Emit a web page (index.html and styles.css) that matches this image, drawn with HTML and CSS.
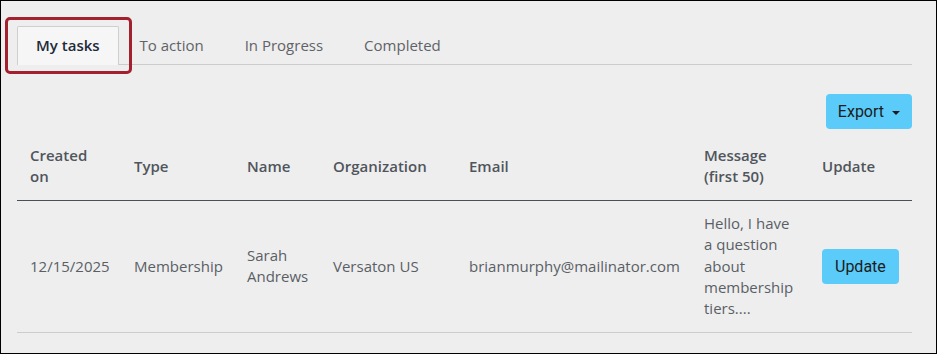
FILE: index.html
```html
<!DOCTYPE html>
<html>
  <head>
    <meta charset="utf-8" />
    <title>My tasks</title>
    <link rel="stylesheet" href="styles.css">
  </head>
  <body>
    <div class="frame">
      <!-- タブ -->
      <ul class="tabs">
        <li class="tab active">My tasks</li>
        <li class="tab">To action</li>
        <li class="tab">In Progress</li>
        <li class="tab">Completed</li>
      </ul>
      <div class="highlight"></div>

      <div class="toolbar">
        <button class="btn">Export <span class="caret"></span></button>
      </div>

      <table class="tasks">
        <colgroup>
          <col class="c-created" />
          <col class="c-type" />
          <col class="c-name" />
          <col class="c-org" />
          <col class="c-email" />
          <col class="c-msg" />
          <col class="c-update" />
        </colgroup>
        <thead>
          <tr>
            <th>Created on</th>
            <th>Type</th>
            <th>Name</th>
            <th>Organization</th>
            <th>Email</th>
            <th>Message (first 50)</th>
            <th>Update</th>
          </tr>
        </thead>
        <tbody>
          <tr>
            <td>12/15/2025</td>
            <td>Membership</td>
            <td>Sarah Andrews</td>
            <td>Versaton US</td>
            <td>brianmurphy@mailinator.com</td>
            <td>Hello, I have a question about membership tiers....</td>
            <td><button class="btn">Update</button></td>
          </tr>
        </tbody>
      </table>
    </div>
  </body>
</html>
```
FILE: styles.css
```css
body {
  margin: 0;
  font-family: "Open Sans", "Liberation Sans", sans-serif;
  font-size: 15px;
  color: #555;
}
.frame {
  position: relative;
  box-sizing: border-box;
  width: 937px;
  height: 354px;
  border: 1px solid #000;
  background-color: #eeeeee;
  padding: 25px 24px 0 16px;
}
.tabs {
  display: flex;
  margin: 0;
  padding: 0;
  list-style: none;
  border-bottom: 1px solid #ccc;
}
.tab {
  height: 37px;
  line-height: 37px;
  padding: 0 18px;
  margin-right: 3px;
  border: 1px solid transparent;
  border-bottom: none;
  color: #5f6368;
}
.tab.active {
  background-color: #f6f6f6;
  border-color: #cfcfcf;
  border-radius: 2px 2px 0 0;
  color: #1e2a3a;
  font-weight: 600;
  margin-right: 2px;
  margin-bottom: -1px;
  height: 38px;
}
/* 注目枠 */
.highlight {
  position: absolute;
  left: 4px;
  top: 16px;
  width: 121px;
  height: 51px;
  border: 3px solid #a3202e;
  border-radius: 5px;
}
.toolbar {
  display: flex;
  justify-content: flex-end;
  margin-top: 29px;
}
.btn {
  font-family: Roboto, "Liberation Sans", sans-serif;
  font-size: 16px;
  color: #1c1c1c;
  background-color: #5bcbfa;
  border: none;
  border-radius: 4px;
  height: 35px;
  padding: 0 12px;
}
.caret {
  display: inline-block;
  margin-left: 4px;
  vertical-align: middle;
  border-top: 4px solid #1c1c1c;
  border-left: 4px solid transparent;
  border-right: 4px solid transparent;
}
.tasks {
  width: 895px;
  margin-top: 4px;
  border-collapse: collapse;
  table-layout: fixed;
}
.c-created { width: 104px; }
.c-type { width: 113px; }
.c-name { width: 86px; }
.c-org { width: 136px; }
.c-email { width: 235px; }
.c-msg { width: 118px; }
.c-update { width: 103px; }
.tasks th,
.tasks td {
  text-align: left;
  vertical-align: middle;
  padding: 12px 13px;
  line-height: 21.4px;
}
.tasks th {
  font-weight: 600;
  color: #50555c;
  border-bottom: 1px solid #4b4f56;
}
.tasks td {
  color: #5a5f66;
  border-bottom: 1px solid #cccccc;
}
.tasks td .btn {
  margin-top: 1px;
  padding: 0 13px;
}
```
